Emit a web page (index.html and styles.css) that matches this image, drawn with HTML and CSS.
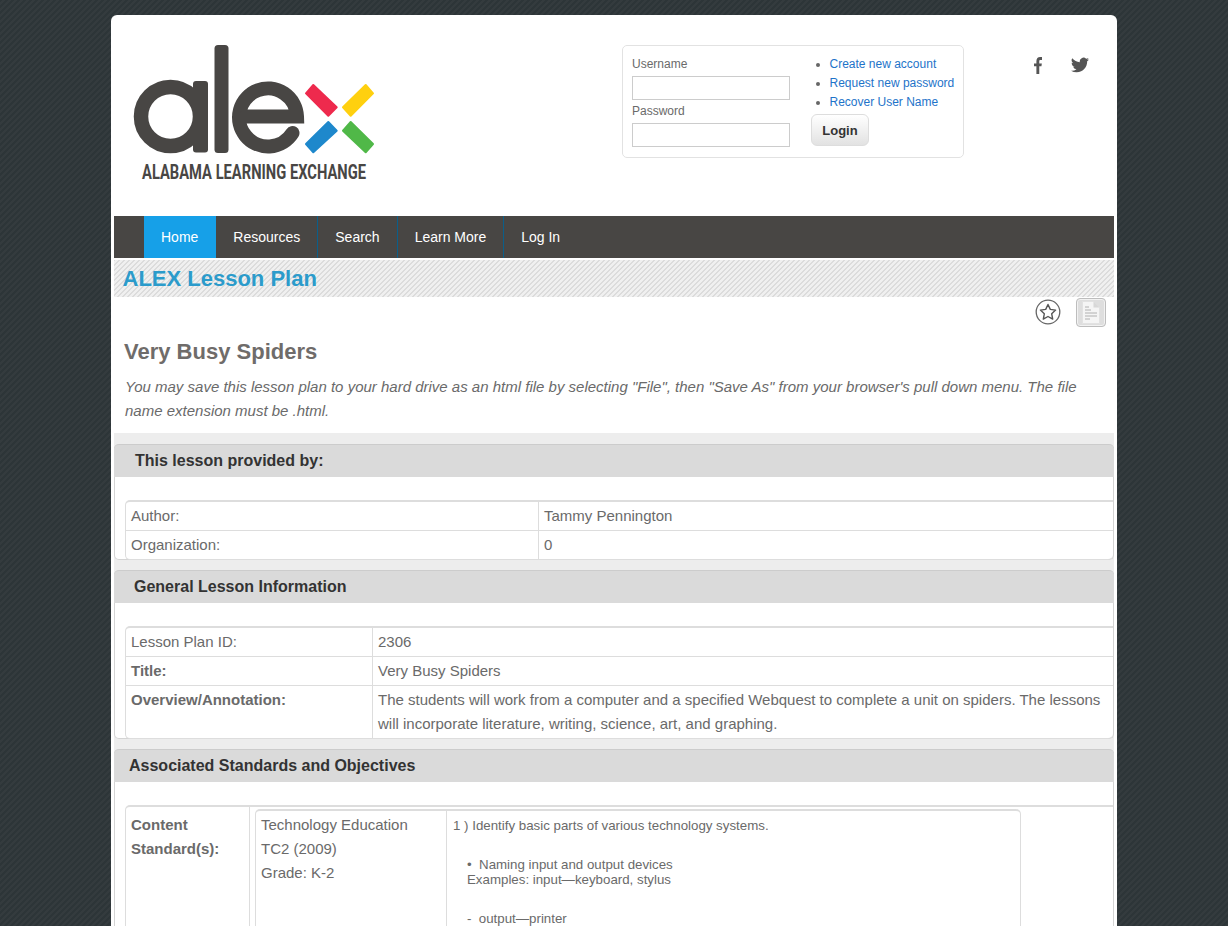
FILE: index.html
```html
<!DOCTYPE html>
<html lang="en">
<head>
<meta charset="utf-8">
<title>ALEX Lesson Plan</title>
<link rel="stylesheet" href="styles.css">
</head>
<body>
<div class="wrapper">
  <header class="site-header">
    <svg class="logo" viewBox="130 40 270 145" width="270" height="145" role="img" aria-label="alex">
      <circle cx="170.5" cy="116.5" r="29.5" fill="none" stroke="#484644" stroke-width="14.5"/>
      <rect x="193" y="81" width="15" height="71.500" rx="3" fill="#484644"/>
      <rect x="214.500" y="45" width="14" height="108" rx="3.500" fill="#484644"/>
      <path d="M239 116.500H297A29 29 0 1 0 292.500 133" fill="none" stroke="#484644" stroke-width="14" stroke-linecap="round"/>
      <rect x="240" y="111" width="62" height="11.500" rx="2" fill="#484644"/>
      <polygon points="306,93.300 313.300,85 336.700,107.300 328.300,115.700" fill="#ee2a4d" stroke="#ee2a4d" stroke-width="2" stroke-linejoin="round"/>
      <polygon points="343,107.300 365.700,85 373,93.300 350.700,115.700" fill="#ffd00f" stroke="#ffd00f" stroke-width="2" stroke-linejoin="round"/>
      <polygon points="306,144 328.300,122 336.700,130.700 313.300,152.300" fill="#1e88cc" stroke="#1e88cc" stroke-width="2" stroke-linejoin="round"/>
      <polygon points="343,130.700 350.700,122 373,144 365.700,152.300" fill="#50b848" stroke="#50b848" stroke-width="2" stroke-linejoin="round"/>
      <text class="logo-text" transform="translate(142 179) scale(1 1.2)" x="0" y="0" textLength="224" lengthAdjust="spacingAndGlyphs">ALABAMA LEARNING EXCHANGE</text>
    </svg>
    <form class="login-box">
      <div class="login-fields">
        <label class="login-label">Username</label>
        <input class="login-input" type="text">
        <label class="login-label login-label-second">Password</label>
        <input class="login-input" type="password">
      </div>
      <div class="login-links">
        <ul class="link-list">
          <li><a href="#">Create new account</a></li>
          <li><a href="#">Request new password</a></li>
          <li><a href="#">Recover User Name</a></li>
        </ul>
        <button class="login-button" type="button">Login</button>
      </div>
    </form>
    <div class="social">
      <svg class="social-f" viewBox="0 0 10 20" width="8" height="17" preserveAspectRatio="none"><path d="M3 20V11H0V7.500H3V5C3 1.800 4.800 0 7.600 0H10V3.500H8.200C7 3.500 6.600 4 6.600 5.100V7.500H9.800L9.300 11H6.600V20Z" fill="#555"/></svg>
      <svg class="social-t" viewBox="0 0 24 24" width="18" height="18"><path d="M23.950 4.570a10 10 0 0 1-2.820.78 4.960 4.960 0 0 0 2.160-2.720 9.900 9.900 0 0 1-3.120 1.180 4.920 4.920 0 0 0-8.380 4.480A13.950 13.950 0 0 1 1.640 3.160a4.920 4.920 0 0 0 1.520 6.570 4.900 4.900 0 0 1-2.230-.61v.06a4.920 4.920 0 0 0 3.950 4.830 4.950 4.950 0 0 1-2.210.08 4.940 4.940 0 0 0 4.600 3.420A9.870 9.870 0 0 1 0 19.540a13.940 13.940 0 0 0 7.550 2.210c9.050 0 14-7.500 14-13.980 0-.21 0-.42-.02-.63a9.940 9.940 0 0 0 2.420-2.570z" fill="#555"/></svg>
    </div>
  </header>

  <nav class="main-nav">
    <a class="nav-item nav-active" href="#">Home</a>
    <a class="nav-item" href="#">Resources</a>
    <a class="nav-item" href="#">Search</a>
    <a class="nav-item" href="#">Learn More</a>
    <a class="nav-item nav-last" href="#">Log In</a>
  </nav>

  <h1 class="page-title">ALEX Lesson Plan</h1>

  <div class="tools">
    <svg class="star-icon" viewBox="0 0 26 26" width="26" height="26">
      <circle cx="13" cy="13" r="11.800" fill="#fff" stroke="#666" stroke-width="1.300"/>
      <path d="M13 5.500L15.300 10.400L20.600 11.100L16.700 14.800L17.700 20.100L13 17.500L8.300 20.100L9.300 14.800L5.400 11.100L10.700 10.400Z" fill="none" stroke="#555" stroke-width="1.400" stroke-linejoin="round"/>
    </svg>
    <div class="doc-button">
      <svg viewBox="0 0 18 23" width="18" height="23">
        <path d="M.5 .5H11.500L17.500 6.500V22.500H.5Z" fill="#f5f5f5" stroke="#e2e2e2" stroke-width="1"/>
        <path d="M11.500 .5V6.500H17.500Z" fill="#d8d8d8"/>
        <path d="M3 6H7M3 9H9M3 12H15M3 15H15M3 18H8" stroke="#b0b0b0" stroke-width="1"/>
      </svg>
    </div>
  </div>

  <h2 class="lesson-title">Very Busy Spiders</h2>
  <p class="lesson-note">You may save this lesson plan to your hard drive as an html file by selecting "File", then "Save As" from your browser's pull down menu. The file name extension must be .html.</p>

  <div class="panels">
    <section class="panel">
      <h3 class="panel-head indent-a">This lesson provided by:</h3>
      <table class="info-table">
        <tr><td class="col-wide">Author:</td><td>Tammy Pennington</td></tr>
        <tr><td class="col-wide">Organization:</td><td>0</td></tr>
      </table>
    </section>

    <section class="panel">
      <h3 class="panel-head indent-b">General Lesson Information</h3>
      <table class="info-table">
        <tr><td class="col-mid">Lesson Plan ID:</td><td>2306</td></tr>
        <tr><td class="col-mid"><b>Title:</b></td><td>Very Busy Spiders</td></tr>
        <tr><td class="col-mid"><b>Overview/Annotation:</b></td><td>The students will work from a computer and a specified Webquest to complete a unit on spiders. The lessons will incorporate literature, writing, science, art, and graphing.</td></tr>
      </table>
    </section>

    <section class="panel">
      <h3 class="panel-head indent-c">Associated Standards and Objectives</h3>
      <table class="info-table">
        <tr>
          <td class="col-narrow"><b>Content Standard(s):</b></td>
          <td class="cell-nested">
            <table class="standard-table">
              <tr>
                <td class="standard-name">Technology Education<br>TC2 (2009)<br>Grade: K-2</td>
                <td class="standard-text">
                  <p class="standard-lead">1 ) Identify basic parts of various technology systems.</p>
                  <p class="standard-item">•&nbsp; Naming input and output devices<br>Examples: input—keyboard, stylus</p>
                  <p class="standard-item">-&nbsp; output—printer</p>
                </td>
              </tr>
            </table>
          </td>
        </tr>
      </table>
    </section>
  </div>
</div>
</body>
</html>
```
FILE: styles.css
```css
* { box-sizing: border-box; }
html, body { height: 100%; }
body {
  margin: 0;
  padding-top: 15px;
  overflow: hidden;
  font-family: "Liberation Sans", Arial, sans-serif;
  color: #666;
  background-color: #30373a;
  background-image: linear-gradient(135deg, #2d3538 25%, #343b3e 25%, #343b3e 50%, #2d3538 50%, #2d3538 75%, #343b3e 75%);
  background-size: 6px 6px;
}
.wrapper {
  width: 1006px;
  height: 911px;
  margin-left: 111px;
  padding: 0 3px;
  overflow: hidden;
  background: #fff;
  border-radius: 6px 6px 0 0;
}
.site-header {
  height: 201px;
  display: flex;
  align-items: flex-start;
}
.logo { margin: 25px 0 0 16px; flex: none; }
.logo-text { font-family: Roboto, "Liberation Sans", sans-serif; font-weight: 700; font-size: 16.300px; fill: #484644; }
.login-box {
  margin: 30px 0 0 222px;
  width: 342px;
  height: 113px;
  padding: 9px 9px 0;
  display: flex;
  border: 1px solid #e2e2e2;
  border-radius: 5px;
  font-size: 12px;
}
.login-fields { width: 158px; flex: none; display: flex; flex-direction: column; }
.login-label { height: 21px; line-height: 18px; color: #6a6a6a; }
.login-label-second { margin-top: 2px; height: 21px; line-height: 18px; }
.login-input { width: 158px; height: 24px; border: 1px solid #ccc; background: #fff; margin: 0; padding: 0; }
.login-links { margin-left: 21px; }
.link-list { margin: 0; padding: 0 0 0 18.500px; line-height: 19px; color: #666; white-space: nowrap; }
.link-list a { color: #1e73c9; text-decoration: none; }
.login-button {
  display: block;
  width: 58px;
  height: 32px;
  margin-top: 2px;
  padding: 0;
  font: bold 13px "Liberation Sans", Arial, sans-serif;
  color: #333;
  background: linear-gradient(#fff, #e2e2e2);
  border: 1px solid #ddd;
  border-radius: 6px;
}
.social { margin: 41px 0 0 70px; display: flex; align-items: center; }
.social-t { margin-left: 29px; }
.main-nav {
  height: 42px;
  padding-left: 30px;
  display: flex;
  background: #484644;
}
.nav-item {
  padding: 0 17px;
  line-height: 42px;
  font-size: 14px;
  color: #fff;
  text-decoration: none;
  border-right: 1px solid #0b5f8a;
}
.nav-active { background: #16a0e8; border-right: 0; padding-right: 18px; }
.nav-last { border-right: 0; }
.page-title {
  margin: 2px 0 0;
  height: 37px;
  padding-left: 8.500px;
  line-height: 37px;
  font-size: 22px;
  font-weight: 700;
  color: #2b9bcb;
  background-color: #efefef;
  background-image: linear-gradient(135deg, #dcdcdc 20%, #f0f0f0 20%, #f0f0f0 50%, #dcdcdc 50%, #dcdcdc 70%, #f0f0f0 70%);
  background-size: 5px 5px;
}
.tools { height: 31px; display: flex; justify-content: flex-end; padding-right: 8px; }
.star-icon { margin: 2px 15px 0 0; }
.doc-button {
  width: 30px;
  height: 29px;
  margin-top: 1px;
  display: flex;
  align-items: center;
  justify-content: center;
  background: #dedede;
  border: 1px solid #bdbdbd;
  border-radius: 4px;
  box-shadow: inset 0 0 0 1px #f2f2f2;
}
.lesson-title { margin: 11px 0 0 10px; font-size: 22px; line-height: 26px; font-weight: 700; color: #6f6c6a; }
.lesson-note { margin: 10px 0 0; padding: 0 10px 0 11px; font-size: 15px; line-height: 24px; font-style: italic; color: #6a6a6a; }
.panels {
  margin-top: 10px;
  padding-top: 11px;
  display: flex;
  flex-direction: column;
  gap: 10px;
  background: #ededed;
}
.panel {
  background: #fff;
  border: 1px solid #d4d4d4;
  border-top: 0;
  border-radius: 5px;
}
.panel-head {
  margin: 0 -1px;
  height: 33px;
  line-height: 32px;
  font-size: 16px;
  font-weight: 700;
  color: #333;
  background: #dadada;
  border-top: 1px solid #ccc;
  border-radius: 5px 5px 0 0;
}
.indent-a { padding-left: 21px; }
.indent-b { padding-left: 20px; }
.indent-c { padding-left: 15px; }
.info-table {
  width: 988px;
  margin: 23px 0 -1px 10px;
  border-collapse: separate;
  border-spacing: 0;
  border-top: 2px solid #ddd;
  border-left: 1px solid #ddd;
  border-bottom: 1px solid #ddd;
  border-radius: 5px 0 5px 5px;
  font-size: 15px;
  line-height: 24px;
  color: #6a6a6a;
}
.info-table > tbody > tr > td {
  padding: 2px 5px;
  vertical-align: top;
  border-top: 1px solid #ddd;
}
.info-table > tbody > tr:first-child > td { border-top: 0; }
.col-wide { width: 413px; border-right: 1px solid #ddd; }
.col-mid { width: 247px; border-right: 1px solid #ddd; }
.info-table > tbody > tr > td.col-narrow { width: 124px; padding-top: 6px; border-right: 1px solid #ddd; }
.standard-table {
  width: 766px;
  border-collapse: separate;
  border-spacing: 0;
  border-top: 2px solid #ddd;
  border-left: 1px solid #ddd;
  border-right: 1px solid #ddd;
  border-radius: 5px 5px 0 0;
}
.standard-name { width: 191px; padding: 2px 5px; vertical-align: top; border-right: 1px solid #ddd; }
.standard-text { padding: 7px 6px 5px; vertical-align: top; font-size: 13.300px; line-height: 15px; }
.standard-lead { margin: 0; height: 39px; }
.standard-item { margin: 0 0 24px 14px; }
```
